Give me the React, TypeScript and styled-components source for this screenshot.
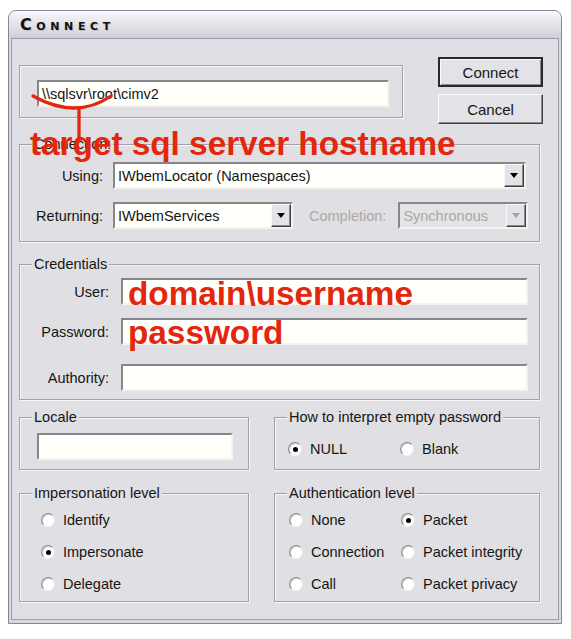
import React from "react";
import styled, { createGlobalStyle } from "styled-components";

const Global = createGlobalStyle`
  html, body { margin: 0; padding: 0; background: #ffffff; }
  body { font-family: "Liberation Sans", Arial, sans-serif; }
  * { box-sizing: border-box; }
`;

const Page = styled.div`
  position: relative;
  width: 571px;
  height: 639px;
  padding: 10px 0 0 8px;
`;

const Window = styled.div`
  width: 554px;
  height: 614px;
  border: 1px solid #85859a;
  border-radius: 8px 8px 0 0;
  overflow: hidden;
  display: flex;
  flex-direction: column;
  background: #d9d9e2;
`;

const TitleBar = styled.div`
  height: 27px;
  flex: none;
  display: flex;
  align-items: center;
  padding-left: 11px;
  background: linear-gradient(to bottom, #fbfbfc 0%, #e8e8ee 35%, #dcdce3 70%, #cfcfd8 100%);
`;

const TitleText = styled.span`
  font-family: "DejaVu Sans", "Liberation Sans", sans-serif;
  font-weight: bold;
  font-size: 16px;
  font-variant: small-caps;
  letter-spacing: 4.6px;
  color: #101010;
  text-shadow: 1px 1px 0 rgba(140, 140, 150, 0.35);
`;

const Frame = styled.div`
  flex: 1;
  display: flex;
  padding: 0 2px 3px 2px;
`;

const Client = styled.div`
  flex: 1;
  border: 1px solid #9d9dad;
  background: #e0dfe3;
  padding: 18px 0 0 7px;
  display: flex;
  flex-direction: column;
  font-size: 14.5px;
  color: #151515;
`;

const TopRow = styled.div`
  display: flex;
  align-items: flex-start;
`;

const Group = styled.div<{ $w: number; $h: number; $mt?: number }>`
  position: relative;
  width: ${(p) => p.$w}px;
  height: ${(p) => p.$h}px;
  margin-top: ${(p) => p.$mt ?? 0}px;
  border: 1px solid #a2a1a8;
  box-shadow: inset 1px 1px 0 #f7f7f9, 1px 1px 0 #f7f7f9;
`;

const Legend = styled.span`
  position: absolute;
  top: -9px;
  left: 12px;
  padding: 0 2px;
  line-height: 17px;
  background: #e0dfe3;
  white-space: nowrap;
`;

const Inner = styled.div<{ $pt: number; $pl: number }>`
  padding: ${(p) => p.$pt}px 0 0 ${(p) => p.$pl}px;
  display: flex;
  flex-direction: column;
`;

const TextBox = styled.div<{ $w: number; $h?: number }>`
  width: ${(p) => p.$w}px;
  height: ${(p) => p.$h ?? 27}px;
  background: #fffffc;
  border: 2px solid;
  border-color: #85858a #f4f3ee #f4f3ee #85858a;
  display: flex;
  align-items: center;
  padding-left: 3px;
  white-space: nowrap;
  flex: none;
`;

const ButtonCol = styled.div`
  margin-left: 35px;
  display: flex;
  flex-direction: column;
  gap: 7px;
`;

const Button = styled.div<{ $default?: boolean }>`
  width: 105px;
  height: 30px;
  display: flex;
  align-items: center;
  justify-content: center;
  font-size: 15px;
  background: #e3e2e6;
  border: ${(p) => (p.$default ? "2px solid #2a2a2a" : "1px solid")};
  border-color: ${(p) => (p.$default ? "#2a2a2a" : "#fbfbfb #404040 #404040 #fbfbfb")};
  box-shadow: ${(p) =>
    p.$default
      ? "inset 1px 1px 0 #fbfbfb, inset -1px -1px 0 #8a8a8a"
      : "inset -1px -1px 0 #8a8a8a"};
`;

const Row = styled.div<{ $mt?: number }>`
  display: flex;
  align-items: center;
  margin-top: ${(p) => p.$mt ?? 0}px;
`;

const FieldLabel = styled.span<{ $w?: number; $ml?: number; $mr: number; $disabled?: boolean }>`
  width: ${(p) => (p.$w ? `${p.$w}px` : "auto")};
  margin-left: ${(p) => p.$ml ?? 0}px;
  margin-right: ${(p) => p.$mr}px;
  text-align: right;
  white-space: nowrap;
  color: ${(p) => (p.$disabled ? "#aaa9a4" : "#151515")};
  flex: none;
`;

const Select = styled.div<{ $w: number; $disabled?: boolean }>`
  width: ${(p) => p.$w}px;
  height: 27px;
  flex: none;
  display: flex;
  align-items: stretch;
  background: ${(p) => (p.$disabled ? "#e4e3e6" : "#fffffc")};
  border: 2px solid;
  border-color: #85858a #f4f3ee #f4f3ee #85858a;
  color: ${(p) => (p.$disabled ? "#aaa9a4" : "#151515")};
`;

const SelectValue = styled.span`
  flex: 1;
  display: flex;
  align-items: center;
  padding-left: 3px;
  white-space: nowrap;
  overflow: hidden;
`;

const ArrowButton = styled.span<{ $disabled?: boolean }>`
  width: 20px;
  flex: none;
  display: flex;
  align-items: center;
  justify-content: center;
  background: #e3e2e6;
  border: 1px solid;
  border-color: #f8f8f8 #404040 #404040 #f8f8f8;
  box-shadow: inset -1px -1px 0 #8a8a8a;
  &::after {
    content: "";
    width: 0;
    height: 0;
    border-left: 4.5px solid transparent;
    border-right: 4.5px solid transparent;
    border-top: 5px solid ${(p) => (p.$disabled ? "#a5a4a8" : "#000")};
  }
`;

const BottomGrid = styled.div`
  display: grid;
  grid-template-columns: 230px 266px;
  grid-template-rows: 53px 109px;
  column-gap: 25px;
  row-gap: 23px;
  margin-top: 17px;
`;

const RadioGrid = styled.div<{ $cols: number; $pt: number; $pl: number }>`
  display: grid;
  grid-template-columns: repeat(${(p) => p.$cols}, 112px);
  grid-auto-rows: 20px;
  row-gap: 12px;
  padding: ${(p) => p.$pt}px 0 0 ${(p) => p.$pl}px;
`;

const Radio = styled.div`
  display: flex;
  align-items: center;
  gap: 8px;
  white-space: nowrap;
`;

const RadioDot = styled.span<{ $checked?: boolean }>`
  width: 14px;
  height: 14px;
  flex: none;
  border-radius: 50%;
  background: #ffffff;
  border: 1px solid;
  border-color: #8b8b8f #ececee #f6f6f6 #8b8b8f;
  box-shadow: inset 1px 1px 0 #cfcfd2;
  display: flex;
  align-items: center;
  justify-content: center;
  &::after {
    content: "";
    width: 5px;
    height: 5px;
    border-radius: 50%;
    background: #000;
    display: ${(p) => (p.$checked ? "block" : "none")};
  }
`;

const Overlay = styled.div`
  position: absolute;
  inset: 0;
  pointer-events: none;
`;

const Note = styled.span<{ $x: number; $y: number }>`
  position: absolute;
  left: ${(p) => p.$x}px;
  top: ${(p) => p.$y}px;
  font-family: "Liberation Sans", Arial, sans-serif;
  font-weight: bold;
  font-size: 33.3px;
  line-height: 33px;
  color: #e3260c;
  white-space: nowrap;
`;

const NoteSvg = styled.svg`
  position: absolute;
  left: 0;
  top: 0;
`;

type Opt = { label: string; checked?: boolean };

const RadioSet = ({ opts, cols, pt, pl }: { opts: Opt[]; cols: number; pt: number; pl: number }) => (
  <RadioGrid $cols={cols} $pt={pt} $pl={pl}>
    {opts.map((o) => (
      <Radio key={o.label}>
        <RadioDot $checked={o.checked} />
        <span>{o.label}</span>
      </Radio>
    ))}
  </RadioGrid>
);

export default function App() {
  return (
    <Page>
      <Global />
      <Window>
        <TitleBar>
          <TitleText>Connect</TitleText>
        </TitleBar>
        <Frame>
          <Client>
            <TopRow>
              <Group $w={384} $h={53} $mt={8}>
                <Inner $pt={14} $pl={17}>
                  <TextBox $w={352}>\\sqlsvr\root\cimv2</TextBox>
                </Inner>
              </Group>
              <ButtonCol>
                <Button $default>Connect</Button>
                <Button>Cancel</Button>
              </ButtonCol>
            </TopRow>

            <Group $w={521} $h={98} $mt={20}>
              <Legend>Connection:</Legend>
              <Inner $pt={17} $pl={0}>
                <Row>
                  <FieldLabel $w={83} $mr={10}>Using:</FieldLabel>
                  <Select $w={413}>
                    <SelectValue>IWbemLocator (Namespaces)</SelectValue>
                    <ArrowButton />
                  </Select>
                </Row>
                <Row $mt={13}>
                  <FieldLabel $w={83} $mr={10}>Returning:</FieldLabel>
                  <Select $w={180}>
                    <SelectValue>IWbemServices</SelectValue>
                    <ArrowButton />
                  </Select>
                  <FieldLabel $ml={16} $mr={12} $disabled>Completion:</FieldLabel>
                  <Select $w={130} $disabled>
                    <SelectValue>Synchronous</SelectValue>
                    <ArrowButton $disabled />
                  </Select>
                </Row>
              </Inner>
            </Group>

            <Group $w={521} $h={136} $mt={22}>
              <Legend>Credentials</Legend>
              <Inner $pt={13} $pl={0}>
                <Row>
                  <FieldLabel $w={89} $mr={12}>User:</FieldLabel>
                  <TextBox $w={407} />
                </Row>
                <Row $mt={13}>
                  <FieldLabel $w={89} $mr={12}>Password:</FieldLabel>
                  <TextBox $w={407} />
                </Row>
                <Row $mt={19}>
                  <FieldLabel $w={89} $mr={12}>Authority:</FieldLabel>
                  <TextBox $w={407} />
                </Row>
              </Inner>
            </Group>

            <BottomGrid>
              <Group $w={230} $h={53}>
                <Legend>Locale</Legend>
                <Inner $pt={15} $pl={17}>
                  <TextBox $w={196} />
                </Inner>
              </Group>
              <Group $w={266} $h={53}>
                <Legend>How to interpret empty password</Legend>
                <RadioSet
                  cols={2}
                  pt={21}
                  pl={13}
                  opts={[{ label: "NULL", checked: true }, { label: "Blank" }]}
                />
              </Group>
              <Group $w={230} $h={109}>
                <Legend>Impersonation level</Legend>
                <RadioSet
                  cols={1}
                  pt={16}
                  pl={21}
                  opts={[{ label: "Identify" }, { label: "Impersonate", checked: true }, { label: "Delegate" }]}
                />
              </Group>
              <Group $w={266} $h={109}>
                <Legend>Authentication level</Legend>
                <RadioSet
                  cols={2}
                  pt={16}
                  pl={14}
                  opts={[
                    { label: "None" },
                    { label: "Packet", checked: true },
                    { label: "Connection" },
                    { label: "Packet integrity" },
                    { label: "Call" },
                    { label: "Packet privacy" },
                  ]}
                />
              </Group>
            </BottomGrid>
          </Client>
        </Frame>
      </Window>

      <Overlay>
        <NoteSvg width="571" height="639" viewBox="0 0 571 639">
          <path d="M33 96 Q76 120 111 96" fill="none" stroke="#e3260c" strokeWidth="3.3" strokeLinecap="round" />
          <path d="M79 107 L79 140" fill="none" stroke="#e3260c" strokeWidth="3.3" />
        </NoteSvg>
        <Note $x={30} $y={127}>target sql server hostname</Note>
        <Note $x={128} $y={277}>domain\username</Note>
        <Note $x={128} $y={316}>password</Note>
      </Overlay>
    </Page>
  );
}
